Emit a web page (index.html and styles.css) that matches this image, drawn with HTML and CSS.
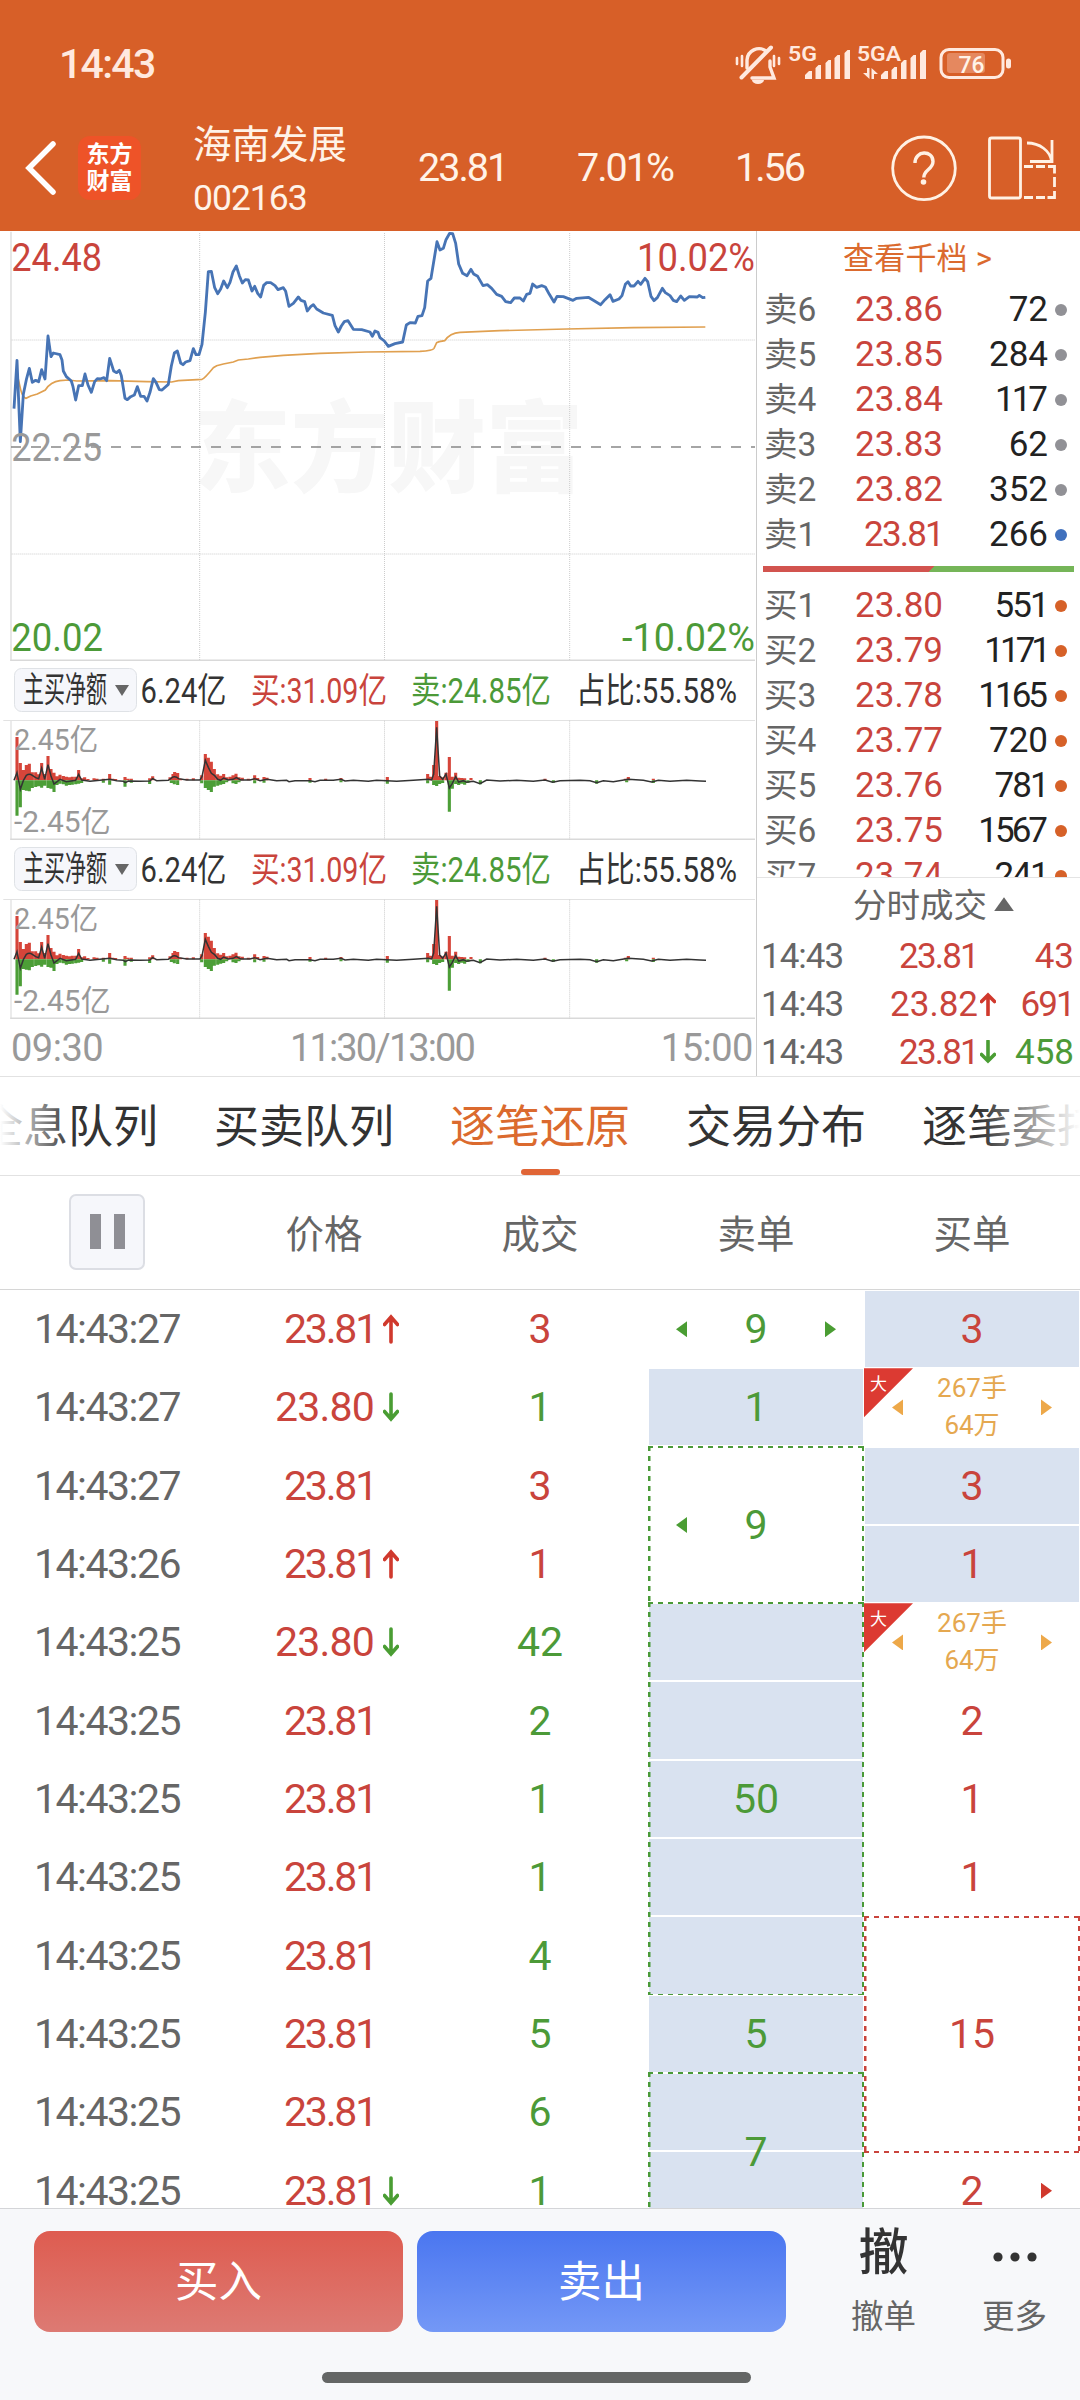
FILE: index.html
```html
<!doctype html>
<html lang="zh-CN">
  <head>
    <meta charset="UTF-8" />
    <meta name="viewport" content="width=device-width, initial-scale=1.0" />
    <title>海南发展 002163</title>
    <link rel="stylesheet" href="styles.css" />
  </head>
  <body>
    <header class="header">
      <div class="status">
        <span class="clock">14:43</span>
        <svg class="status-icons" viewBox="730 40 290 48" width="290" height="48">
          <!-- muted bell -->
          <g fill="none" stroke="#ffe9df" stroke-width="3.4" stroke-linecap="round">
            <path d="M747 68V60a12 12 0 0 1 19-9M770 61v6l4 11H752" />
            <path d="M741.500 77.500 771 47.500" stroke-width="4" />
            <path d="M737 58v6M742 56v10M774 56v10M779 58v6" stroke-width="2.600" />
          </g>
          <path d="M752 80h12a6 4 0 0 1-12 0" fill="#ffe9df" />
          <g fill="#ffe9df">
            <text class="net" x="788" y="61" textLength="29" lengthAdjust="spacingAndGlyphs">5G</text>
            <path d="M805 79v-4l4-4h3v8zM815.500 79V68l3-3h2.500v14zM825.500 79V63l3-3h2.500v19zM834.500 79V58l3-3h2.500v24zM844.500 79V53l3-3h2.500v29z" />
            <text class="net" x="857" y="61" textLength="44" lengthAdjust="spacingAndGlyphs">5GA</text>
            <path d="M881 79v-4l4-4h3v8zM891.500 79V70l3-3h2.500v12zM901 79V63l3-3h2.500v19zM910.500 79V58l3-3h2.500v24zM920 79V53l3-3h3v29z" />
            <path d="M867 68h2.500v11L863 73h4zM871.500 79h2.500v-5h4l-6.500-6z" />
          </g>
          <rect x="947" y="53" width="38" height="20" rx="3" fill="#e5885f" />
          <rect x="941" y="49.500" width="62" height="28" rx="8" fill="none" stroke="#ffe9df" stroke-width="3" />
          <rect x="1006" y="58.500" width="5" height="10" rx="2.500" fill="#ffe9df" />
          <text class="battery" x="958.500" y="73" textLength="26" lengthAdjust="spacingAndGlyphs">76</text>
        </svg>
      </div>
      <div class="titlebar">
        <svg class="back" viewBox="0 0 36 54" width="36" height="54">
          <path d="M31 3 7 27l24 24" fill="none" stroke="#fff" stroke-width="5.500" stroke-linecap="round" />
        </svg>
        <div class="logo"><span>东方</span><span>财富</span></div>
        <div class="stock">
          <div class="stock-name">海南发展</div>
          <div class="stock-code">002163</div>
        </div>
        <span class="quote quote-price">23.81</span>
        <span class="quote quote-pct">7.01%</span>
        <span class="quote quote-diff">1.56</span>
        <svg class="tools" viewBox="885 130 180 74" width="180" height="74">
          <g fill="none" stroke="#fff1e4" stroke-width="2.800">
            <circle cx="924" cy="167.300" r="31.300" />
            <path d="M915 162c0-13 18-13 18-1.500 0 8-9.200 8-9.200 16" stroke-width="3.400" />
            <rect x="989.500" y="137" width="31" height="60" rx="2" />
            <path d="M1027 142c13 0 23 8 24.500 18M1052 139v21.500h-22" />
            <path d="M1024 165.500h9M1036 165.500h9M1048 165.500h6.500v7M1054.500 176v10M1054.500 190v6.500h-7M1045 196.500h-9M1033 196.500h-9" />
          </g>
          <circle cx="923.500" cy="181" r="2.800" fill="#fff1e4" />
        </svg>
      </div>
    </header>

    <!-- shared by both volume charts -->
    <svg class="defs" width="0" height="0">
      <symbol id="flow" viewBox="0 210 2271 360">
        <path d="M10 211h2255M33 210v360" stroke="#e2e2e2" stroke-width="4" />
        <path d="M31 568h2234" stroke="#d9d9d9" stroke-width="5" />
        <path d="M599 212v356M1153.500 212v356M1709 212v356" stroke="#ccc" stroke-width="3" stroke-dasharray="3 3" />
        <path d="M51 391v-130M61 391v-52M70 391v-31M79 391v-46M88 391v-50M97 391v-24M107 391v-24M116 391v-18M125 391v-52M134 391v-19M144 391v-73M153 391v-34M162 391v-23M171 391v-12M180 391v-17M190 391v-13M199 391v-11M208 391v-9M217 391v-11M227 391v-11M236 391v-31M245 391v-6M254 391v-9M264 391v-4M282 391v-6M291 391v-5M310 391v-5M329 391v-19M338 391v-5M347 391v-4M375 391v-10M384 391v-5M394 391v-5M449 391v-6M458 391v-12M510 391v-9M519 391v-19M524 391v-25M533 391v-22M542 391v-5M561 391v-5M580 391v-6M605 391v-15M616 391v-79M625 391v-68M634 391v-56M643 391v-34M653 391v-18M662 391v-14M671 391v-19M680 391v-9M690 391v-11M699 391v-15M708 391v-20M717 391v-9M727 391v-8M745 391v-5M764 391v-15M773 391v-7M792 391v-10M801 391v-8M930 391v-7M977 391v-5M1023 391v-7M1162 391v-10M1283 391v-19M1292 391v-11M1301 391v-46M1310 391v-178M1319 391v-13M1328 391v-9M1338 391v-23M1348 391v-70M1357 391v-11M1367 391v-23M1376 391v-8M1385 391v-7M1394 391v-6M1413 391v-7M1635 391v-5M1876 391v-5M1885 391v-10M1960 391v-5" stroke="#d6453a" stroke-width="9.300" />
        <path d="M51 391v106M61 391v81M70 391v29M79 391v31M88 391v33M97 391v23M107 391v20M116 391v18M125 391v22M134 391v16M144 391v23M153 391v25M162 391v35M171 391v14M180 391v10M190 391v12M199 391v16M208 391v14M217 391v13M227 391v12M236 391v10M245 391v8M310 391v7M329 391v13M375 391v19M394 391v7M449 391v11M514 391v8M523 391v12M533 391v14M605 391v9M616 391v23M625 391v29M634 391v35M643 391v19M653 391v16M662 391v13M671 391v11M680 391v6M699 391v9M708 391v11M717 391v6M764 391v9M792 391v7M930 391v7M1023 391v6M1162 391v10M1283 391v9M1301 391v14M1310 391v17M1319 391v11M1328 391v8M1348 391v94M1357 391v25M1367 391v11M1376 391v14M1385 391v10M1394 391v13M1404 391v7M1441 391v12M1660 391v7M1790 391v10M1880 391v6M1960 391v8" stroke="#4c9e37" stroke-width="9.300" />
        <path d="M42 391 51 368 61 418 70 392 79 376Q88 370 97 376L107 383 116 386 125 354 134 388 144 344 153 378 162 402 180 388 199 395 227 391 236 373 245 390 270 394 300 391 329 388 350 392 370 394 376 398 385 393 420 394 449 393 458 386 470 392 505 391 519 381Q528 378 536 386L560 390 600 390 606 380 616 331 625 352 634 370 644 377 653 388 662 391 671 384 685 390 699 388 709 383 722 390 750 390 764 386 780 392 801 388 830 392 860 391 867 395 885 392 930 392 945 395 960 391 1000 391 1023 388 1035 393 1060 391 1105 394 1130 391 1190 394 1240 391 1285 388 1295 390 1301 372 1310 232 1319 378 1328 388 1338 372 1348 414 1357 400 1367 380 1376 396 1390 392 1400 397 1420 394 1440 401 1460 390 1500 393 1550 391 1600 394 1635 390 1658 397 1680 392 1740 391 1770 392 1790 398 1810 392 1840 395 1885 388 1930 391 1955 396 1975 391 2010 394 2060 391 2100 393 2118 394" fill="none" stroke="#333" stroke-width="4.500" />
      </symbol>
    </svg>

    <main class="market">
      <section class="charts">
        <svg class="price-chart" viewBox="0 18 2271 1290" width="757" height="430">
          <text class="watermark" x="580" y="778" textLength="1170" lengthAdjust="spacingAndGlyphs">东方财富</text>
          <path d="M33 20v1288" stroke="#e2e2e2" stroke-width="5" />
          <path d="M31 1306h2234" stroke="#d9d9d9" stroke-width="5" />
          <path d="M35 345h2230M35 987h2230M599 24v1282M1153.500 24v1282M1709 24v1282" stroke="#ccc" stroke-width="3" stroke-dasharray="3 3" />
          <path d="M33 666h2232" stroke="#888" stroke-width="5" stroke-dasharray="30 30" />
          <path d="M52 450 62 494Q68 518 78 520L92 513 112 507 136 495Q152 470 180 467L205 465 230 468 330 467 440 470 515 471 535 467 606 463Q614 460 640 428L650 422 670 417 700 411 715 405 745 402 780 397 850 391 960 385 1100 381 1260 379Q1298 377 1302 370L1310 353 1318 350 1334 347Q1350 324 1380 322L1500 317 1700 312 1900 308 2116 306" fill="none" stroke="#e0a050" stroke-width="5" />
          <path d="M42 551 51 406 61 650 70 508 79 464 88 430 97 472 107 466 116 470 125 434 135 462 144 333 153 395 160 384 180 389 186 405 190 438 199 455 214 468 219 485 227 525 236 482 247 482 255 447 264 480 274 502 284 470 292 461 300 462 312 458 320 467 329 400 341 438 350 443 358 436 364 452 375 520 382 524 392 515 403 510 412 485 422 514 432 514 441 528 450 502 460 461 468 472 478 494 486 495 505 478 514 423 523 384 532 378 542 414 549 419 557 411 570 407 580 371 588 389 597 389 606 358 616 262 625 140 634 139 644 188 653 206 662 192 671 168 682 188 690 172 699 141 709 123 718 152 727 174 736 164 745 165 756 198 764 184 773 205 782 216 791 181 800 173 812 173 825 182 834 194 850 188 857 199 867 244 880 235 895 216 903 226 914 230 922 258 932 245 940 239 950 252 970 264 997 271 1005 302 1015 321 1024 303 1033 290 1044 287 1060 313 1085 314 1110 321 1117 334 1125 318 1134 322 1140 338 1153 348 1165 364 1185 356 1208 351 1219 300 1230 293 1246 294 1254 274 1266 272 1274 248 1283 168 1293 160 1311 50 1320 75 1330 70 1338 44 1349 25 1358 26 1367 55 1376 117 1388 145 1401 152 1413 133 1421 147 1433 154 1449 182 1462 179 1475 190 1490 208 1505 214 1517 230 1532 233 1543 219 1560 219 1570 228 1580 208 1590 205 1598 177 1610 187 1625 182 1636 186 1648 208 1662 231 1671 214 1690 215 1719 226 1730 220 1765 217 1780 226 1802 239 1815 224 1830 209 1839 229 1857 222 1866 212 1876 178 1884 170 1892 183 1902 183 1914 169 1922 178 1935 160 1943 170 1953 214 1962 227 1972 218 1987 190 1996 203 2010 212 2020 226 2030 230 2042 213 2053 226 2068 215 2092 216 2098 211 2108 218 2116 217" fill="none" stroke="#4774b5" stroke-width="8.500" stroke-linejoin="round" />
          <text class="scale up" x="34" y="138" textLength="272" lengthAdjust="spacingAndGlyphs">24.48</text>
          <text class="scale mid" x="34" y="708" textLength="272" lengthAdjust="spacingAndGlyphs">22.25</text>
          <text class="scale down" x="34" y="1277" textLength="275" lengthAdjust="spacingAndGlyphs">20.02</text>
          <text class="scale up" x="1911" y="138" textLength="354" lengthAdjust="spacingAndGlyphs">10.02%</text>
          <text class="scale down" x="1866" y="1277" textLength="399" lengthAdjust="spacingAndGlyphs">-10.02%</text>
        </svg>

        <svg class="flow-head" viewBox="0 661 757 59" width="757" height="59">
          <rect x="14.500" y="668.500" width="122" height="43" rx="7" fill="#f6f7fb" stroke="#dfe2e6" />
          <text x="23" y="701.500" textLength="84" lengthAdjust="spacingAndGlyphs">主买净额</text>
          <path d="M115 685h14l-7 11z" fill="#666" />
          <text x="140.500" y="703" textLength="86" lengthAdjust="spacingAndGlyphs">6.24亿</text>
          <text class="up" x="251" y="703" textLength="136" lengthAdjust="spacingAndGlyphs">买:31.09亿</text>
          <text class="down" x="411" y="703" textLength="140" lengthAdjust="spacingAndGlyphs">卖:24.85亿</text>
          <text x="576" y="703" textLength="161" lengthAdjust="spacingAndGlyphs">占比:55.58%</text>
        </svg>
        <svg class="flow-chart" viewBox="0 210 2271 360" width="757" height="120">
          <use href="#flow" x="0" y="210" width="2271" height="360" />
          <text class="flow-scale" x="43" y="300" textLength="252" lengthAdjust="spacingAndGlyphs">2.45亿</text>
          <text class="flow-scale" x="42" y="546" textLength="290" lengthAdjust="spacingAndGlyphs">-2.45亿</text>
        </svg>

        <svg class="flow-head" viewBox="0 661 757 59" width="757" height="59">
          <rect x="14.500" y="668.500" width="122" height="43" rx="7" fill="#f6f7fb" stroke="#dfe2e6" />
          <text x="23" y="701.500" textLength="84" lengthAdjust="spacingAndGlyphs">主买净额</text>
          <path d="M115 685h14l-7 11z" fill="#666" />
          <text x="140.500" y="703" textLength="86" lengthAdjust="spacingAndGlyphs">6.24亿</text>
          <text class="up" x="251" y="703" textLength="136" lengthAdjust="spacingAndGlyphs">买:31.09亿</text>
          <text class="down" x="411" y="703" textLength="140" lengthAdjust="spacingAndGlyphs">卖:24.85亿</text>
          <text x="576" y="703" textLength="161" lengthAdjust="spacingAndGlyphs">占比:55.58%</text>
        </svg>
        <svg class="flow-chart" viewBox="0 210 2271 360" width="757" height="120">
          <use href="#flow" x="0" y="210" width="2271" height="360" />
          <text class="flow-scale" x="43" y="300" textLength="252" lengthAdjust="spacingAndGlyphs">2.45亿</text>
          <text class="flow-scale" x="42" y="546" textLength="290" lengthAdjust="spacingAndGlyphs">-2.45亿</text>
        </svg>

        <div class="axis"><span>09:30</span><span class="noon">11:30/13:00</span><span>15:00</span></div>
      </section>

      <aside class="book">
        <div class="book-more">查看千档 &gt;</div>
        <div class="levels">
          <div class="level"><span>卖6</span><b>23.86</b><em>72</em><i></i></div>
          <div class="level"><span>卖5</span><b>23.85</b><em>284</em><i></i></div>
          <div class="level"><span>卖4</span><b>23.84</b><em class="tight">117</em><i></i></div>
          <div class="level"><span>卖3</span><b>23.83</b><em>62</em><i></i></div>
          <div class="level"><span>卖2</span><b>23.82</b><em>352</em><i></i></div>
          <div class="level"><span>卖1</span><b class="end-one">23.81</b><em>266</em><i class="blue"></i></div>
        </div>
        <div class="ratio"></div>
        <div class="levels bids">
          <div class="level"><span>买1</span><b>23.80</b><em class="end-one">551</em><i></i></div>
          <div class="level"><span>买2</span><b>23.79</b><em class="tighter">1171</em><i></i></div>
          <div class="level"><span>买3</span><b>23.78</b><em class="tight">1165</em><i></i></div>
          <div class="level"><span>买4</span><b>23.77</b><em>720</em><i></i></div>
          <div class="level"><span>买5</span><b>23.76</b><em class="end-one">781</em><i></i></div>
          <div class="level"><span>买6</span><b>23.75</b><em class="tight">1567</em><i></i></div>
          <div class="level"><span>买7</span><b>23.74</b><em class="end-one">241</em><i></i></div>
        </div>
        <div class="deals-title">分时成交<i></i></div>
        <div class="deal"><span>14:43</span><b class="end-one">23.81</b><s></s><em class="up">43</em></div>
        <div class="deal"><span>14:43</span><b>23.82</b><s><svg viewBox="0 0 16 24" width="16" height="24"><path class="arrow-up" d="M8 23V3M1.500 9.500 8 3l6.500 6.500" /></svg></s><em class="up end-one">691</em></div>
        <div class="deal"><span>14:43</span><b class="end-one">23.81</b><s><svg viewBox="0 0 16 24" width="16" height="24"><path class="arrow-down" d="M8 1v20M1.500 14.500 8 21l6.500-6.500" /></svg></s><em class="down">458</em></div>
      </aside>
    </main>

    <nav class="tabs">
      <span>全息队列</span>
      <span>买卖队列</span>
      <span class="active">逐笔还原</span>
      <span>交易分布</span>
      <span>逐笔委托</span>
    </nav>

    <div class="cols">
      <div><button class="pause"><i></i><i></i></button></div>
      <div>价格</div>
      <div>成交</div>
      <div>卖单</div>
      <div>买单</div>
    </div>

    <section class="ticks">
      <div class="trades">
        <div class="trade"><span>14:43:27</span><b class="end-one">23.81</b><s><svg viewBox="0 0 16 30" width="16" height="30"><path class="arrow-up" d="M8 28V3M1.500 10.500 8 3l6.500 7.500" /></svg></s><em class="up">3</em></div>
        <div class="trade"><span>14:43:27</span><b>23.80</b><s><svg viewBox="0 0 16 30" width="16" height="30"><path class="arrow-down" d="M8 2v25M1.500 19.500 8 27l6.500-7.500" /></svg></s><em class="down">1</em></div>
        <div class="trade"><span>14:43:27</span><b class="end-one">23.81</b><s></s><em class="up">3</em></div>
        <div class="trade"><span>14:43:26</span><b class="end-one">23.81</b><s><svg viewBox="0 0 16 30" width="16" height="30"><path class="arrow-up" d="M8 28V3M1.500 10.500 8 3l6.500 7.500" /></svg></s><em class="up">1</em></div>
        <div class="trade"><span>14:43:25</span><b>23.80</b><s><svg viewBox="0 0 16 30" width="16" height="30"><path class="arrow-down" d="M8 2v25M1.500 19.500 8 27l6.500-7.500" /></svg></s><em class="down">42</em></div>
        <div class="trade"><span>14:43:25</span><b class="end-one">23.81</b><s></s><em class="down">2</em></div>
        <div class="trade"><span>14:43:25</span><b class="end-one">23.81</b><s></s><em class="down">1</em></div>
        <div class="trade"><span>14:43:25</span><b class="end-one">23.81</b><s></s><em class="down">1</em></div>
        <div class="trade"><span>14:43:25</span><b class="end-one">23.81</b><s></s><em class="down">4</em></div>
        <div class="trade"><span>14:43:25</span><b class="end-one">23.81</b><s></s><em class="down">5</em></div>
        <div class="trade"><span>14:43:25</span><b class="end-one">23.81</b><s></s><em class="down">6</em></div>
        <div class="trade"><span>14:43:25</span><b class="end-one">23.81</b><s><svg viewBox="0 0 16 30" width="16" height="30"><path class="arrow-down" d="M8 2v25M1.500 19.500 8 27l6.500-7.500" /></svg></s><em class="down">1</em></div>
      </div>

      <div class="orders sell">
        <div class="order"><i class="prev"></i>9<i class="next"></i></div>
        <div class="order fill">1</div>
        <div class="order box rows-2"><i class="prev"></i>9</div>
        <div class="order fill box rows-5">50</div>
        <div class="order fill">5</div>
        <div class="order fill box rows-2">7</div>
      </div>

      <div class="orders buy">
        <div class="order fill">3</div>
        <div class="order big"><u>大</u><i class="prev"></i><div>267手<br />64万</div><i class="next"></i></div>
        <div class="order fill">3</div>
        <div class="order fill">1</div>
        <div class="order big"><u>大</u><i class="prev"></i><div>267手<br />64万</div><i class="next"></i></div>
        <div class="order">2</div>
        <div class="order">1</div>
        <div class="order">1</div>
        <div class="order box rows-3">15</div>
        <div class="order">2<i class="next"></i></div>
      </div>
    </section>

    <footer class="footer">
      <div class="actions">
        <button class="btn btn-buy">买入</button>
        <button class="btn btn-sell">卖出</button>
        <div class="action"><strong>撤</strong><span>撤单</span></div>
        <div class="action">
          <strong><svg viewBox="0 0 44 10" width="44" height="10"><g fill="#333"><circle cx="5" cy="5" r="4.600" /><circle cx="22" cy="5" r="4.600" /><circle cx="39" cy="5" r="4.600" /></g></svg></strong>
          <span>更多</span>
        </div>
      </div>
      <div class="home"></div>
    </footer>
  </body>
</html>
```
FILE: styles.css
```css
* {
  box-sizing: border-box;
}
body {
  margin: 0;
  width: 1080px;
  height: 2400px;
  overflow: hidden;
  background: #fff;
  color: #333;
  font-family: Roboto, "Noto Sans CJK SC", sans-serif;
  font-weight: 380;
}
b,
i,
em,
s,
u,
strong {
  font-weight: inherit;
  font-style: normal;
  text-decoration: none;
}
svg {
  display: block;
}
.defs {
  position: absolute;
}
.up {
  color: #c9443c;
  fill: #c9443c;
}
.down {
  color: #4c9a38;
  fill: #4c9a38;
}
.arrow-up,
.arrow-down {
  fill: none;
  stroke: #d0392d;
  stroke-width: 3.600;
  stroke-linecap: round;
}
.arrow-down {
  stroke: #4a9d33;
}

/* header */
.header {
  height: 231px;
  background: #d75f28;
  color: #fff3e8;
}
.status {
  display: flex;
  justify-content: space-between;
  height: 104px;
  padding: 40px 60px 0 59px;
}
.clock {
  font-size: 41px;
  line-height: 48px;
  font-weight: 500;
  letter-spacing: -1.700px;
  color: #ffe9df;
}
.net {
  font-size: 21px;
  font-weight: 600;
}
.battery {
  font-size: 24px;
  font-weight: 500;
  fill: #fff3e8;
}
.titlebar {
  display: flex;
  align-items: center;
  height: 127px;
  padding-left: 22px;
}
.back {
  margin-right: 20px;
}
.logo {
  display: flex;
  flex-direction: column;
  justify-content: center;
  width: 63px;
  height: 64px;
  border-radius: 12px;
  background: #ee5328;
  color: #fff;
  font-size: 23px;
  font-weight: 700;
  line-height: 27px;
  text-align: center;
}
.stock {
  width: 226px;
  padding: 6px 0 0 52px;
}
.stock-name {
  font-size: 38.500px;
  line-height: 54px;
  white-space: nowrap;
}
.stock-code {
  font-size: 35.500px;
  line-height: 52px;
  letter-spacing: -1px;
}
.quote {
  font-size: 39.500px;
  letter-spacing: -2px;
}
.quote-price {
  width: 160px;
  padding-left: 51px;
}
.quote-pct {
  width: 158px;
  padding-left: 50px;
}
.quote-diff {
  width: 200px;
  padding-left: 50px;
}
.tools {
  flex: none;
}

/* charts */
.market {
  display: flex;
  height: 846px;
  border-bottom: 1px solid #e2e2e2;
}
.charts {
  width: 757px;
  border-right: 1px solid #ccc;
}
.watermark {
  font-size: 298px;
  font-weight: 900;
  fill: #f7f7f7;
}
.scale {
  font-size: 114px;
}
.mid {
  fill: #999;
}
.flow-head {
  font-size: 35px;
  fill: #333;
  font-weight: 400;
}
.flow-scale {
  font-size: 89px;
  fill: #999;
}
.axis {
  display: flex;
  justify-content: space-between;
  padding: 0 3px 0 11px;
  font-size: 38px;
  line-height: 58px;
  letter-spacing: -0.500px;
  color: #999;
}
.noon {
  letter-spacing: -1.900px;
}

/* order book */
.book {
  flex: 1;
  display: flex;
  flex-direction: column;
}
.book-more {
  height: 56px;
  padding-left: 86px;
  font-size: 31px;
  line-height: 56px;
  letter-spacing: 0.200px;
  color: #db6a2e;
}
.level {
  display: flex;
  align-items: center;
  height: 45px;
  padding-left: 7px;
  font-size: 35px;
}
.level span {
  width: 60px;
  font-size: 33.500px;
  line-height: 45px;
  color: #666;
}
.level b {
  width: 119px;
  text-align: right;
  color: #c9443c;
}
.level em {
  width: 105px;
  text-align: right;
  color: #222;
}
.level .end-one,
.deal .end-one {
  letter-spacing: -1.800px;
}
.level .tight {
  padding-right: 3px;
  letter-spacing: -3px;
}
.level .tighter {
  letter-spacing: -4px;
  padding-right: 1px;
}
.level i {
  width: 12px;
  height: 12px;
  margin-left: 7px;
  border-radius: 50%;
  background: #919196;
}
.level .blue {
  background: #4070bd;
}
.bids .level i {
  background: #d66128;
}
.ratio {
  flex: none;
  height: 6px;
  margin: 9px 6px 11px;
  background: linear-gradient(135deg, #d2544f 121px, #75b558 121px);
}
.bids {
  height: 296px;
  overflow: hidden;
  border-bottom: 1px solid #e4e4e4;
}
.deals-title {
  display: flex;
  align-items: center;
  justify-content: center;
  height: 54px;
  padding: 0 0 6px 30px;
  font-size: 33.500px;
  color: #666;
}
.deals-title i {
  width: 20px;
  height: 14px;
  margin: 4px 0 0 7px;
  background: #666;
  clip-path: polygon(50% 0, 100% 100%, 0 100%);
}
.deal {
  display: flex;
  align-items: center;
  height: 48px;
  padding-left: 4px;
  font-size: 35px;
  color: #666;
}
.deal span {
  width: 100px;
  letter-spacing: -1px;
}
.deal b {
  width: 117px;
  text-align: right;
  color: #c9443c;
}
.deal s {
  width: 22px;
  padding-left: 2px;
}
.deal em {
  width: 74px;
  text-align: right;
}

/* tabs */
.tabs {
  position: relative;
  display: flex;
  gap: 56px;
  height: 99px;
  padding-left: 214px;
  border-bottom: 1px solid #e2e2e2;
  font-size: 45px;
  line-height: 101px;
  white-space: nowrap;
  overflow: hidden;
}
.tabs span:first-child {
  margin-left: -236px;
}
.tabs::before,
.tabs::after {
  content: "";
  position: absolute;
  top: 0;
  left: 0;
  width: 72px;
  height: 97px;
  background: linear-gradient(to right, #fff, rgba(255, 255, 255, 0));
}
.tabs::after {
  left: auto;
  right: 0;
  width: 100px;
  background: linear-gradient(to left, #fff, rgba(255, 255, 255, 0));
}
.tabs .active {
  position: relative;
  color: #db6a2e;
}
.tabs .active::after {
  content: "";
  position: absolute;
  left: 71px;
  top: 92px;
  width: 39px;
  height: 6px;
  border-radius: 3px;
  background: #e06536;
}

/* tick list */
.cols {
  display: grid;
  grid-template-columns: repeat(5, 216px);
  align-items: center;
  height: 114px;
  padding-bottom: 4px;
  border-bottom: 1px solid #d6d6d6;
  font-size: 38.500px;
  text-align: center;
  color: #666;
}
.pause {
  display: flex;
  justify-content: center;
  align-items: center;
  gap: 13px;
  width: 76px;
  height: 76px;
  margin: 2px 0 0 69px;
  padding: 0;
  border: 2px solid #dcdee4;
  border-radius: 7px;
  background: #f6f7fb;
}
.pause i {
  width: 11px;
  height: 35px;
  background: #8f8f95;
}
.ticks {
  display: grid;
  grid-template-columns: 648px 216px 216px;
  height: 918px;
  overflow: hidden;
  font-size: 41px;
}
.trade {
  display: flex;
  align-items: center;
  height: 78.330px;
  color: #666;
}
.trade span {
  width: 216px;
  padding-right: 2px;
  letter-spacing: -1.500px;
  text-align: center;
}
.trade b {
  width: 160px;
  padding-right: 2px;
  letter-spacing: -0.800px;
  text-align: right;
  color: #c9443c;
}
.trade .end-one {
  padding-right: 0;
  letter-spacing: -2.200px;
}
.trade s {
  width: 56px;
  padding-left: 7px;
}
.trade em {
  width: 216px;
  text-align: center;
}
.order {
  position: relative;
  display: flex;
  align-items: center;
  justify-content: center;
  width: 216px;
  height: 78.330px;
}
.sell {
  --line: #4a9a38;
  color: #4c9a38;
}
.buy {
  --line: #c9443c;
  color: #c9443c;
}
.rows-2 {
  height: 156.660px;
}
.rows-3 {
  height: 235px;
}
.rows-5 {
  height: 391.650px;
}
/* one band per trade row, split by a white line */
.fill {
  background: repeating-linear-gradient(#fff 0 1px, #d9e2f0 1px 77.330px, #fff 77.330px 78.330px);
  box-shadow: inset 1px 0 #fff, inset -1px 0 #fff;
}
/* 5px dashes on all four sides */
.box::after {
  content: "";
  position: absolute;
  inset: -1px 0 -1px 0;
  background:
    repeating-linear-gradient(to right, var(--line) 0 5px, transparent 5px 10px) top / 100% 2px no-repeat,
    repeating-linear-gradient(to right, var(--line) 0 5px, transparent 5px 10px) bottom / 100% 2px no-repeat,
    repeating-linear-gradient(var(--line) 0 5px, transparent 5px 10px) left / 2.500px 100% no-repeat,
    repeating-linear-gradient(var(--line) 0 5px, transparent 5px 10px) right / 2.500px 100% no-repeat;
}
.prev,
.next {
  position: absolute;
  left: 28px;
  top: calc(50% - 8px);
  width: 11px;
  height: 16px;
  background: #4a9d33;
  clip-path: polygon(0 50%, 100% 0, 100% 100%);
}
.next {
  left: auto;
  right: 28px;
  clip-path: polygon(0 0, 100% 50%, 0 100%);
}
.buy .next {
  background: #d0392d;
}
.big {
  font-size: 26px;
  line-height: 37px;
  text-align: center;
  color: #e5a850;
}
.buy .big .prev,
.buy .big .next {
  background: #eda849;
}
.big u {
  position: absolute;
  left: 0;
  top: 0;
  width: 49px;
  height: 49px;
  padding-left: 6px;
  background: #dc3a32;
  clip-path: polygon(0 0, 100% 0, 0 100%);
  color: #fff;
  font-size: 17px;
  line-height: 33px;
  text-align: left;
}

/* footer */
.footer {
  height: 192px;
  border-top: 1px solid #d4d5d8;
  background: #f7f8fa;
}
.actions {
  display: flex;
  padding: 22px 0 0 34px;
}
.btn {
  width: 369px;
  height: 101px;
  margin-right: 14px;
  padding: 0 0 6px;
  border: 0;
  border-radius: 16px;
  color: #fff;
  font: inherit;
  font-size: 43.500px;
  font-weight: 400;
}
.btn-buy {
  background: linear-gradient(#de5c50, #dd7a73);
}
.btn-sell {
  background: linear-gradient(#4a76f0, #7498f6);
}
.action {
  display: flex;
  flex-direction: column;
  align-items: center;
  width: 131px;
  margin-left: 18px;
}
.action + .action {
  margin-left: 0;
}
.action strong {
  display: flex;
  align-items: center;
  height: 52px;
  font-size: 50px;
  font-weight: 500;
  line-height: 44px;
}
.action:first-of-type strong {
  padding-bottom: 8px;
}
.action span {
  margin-top: 10px;
  font-size: 32.500px;
  line-height: 48px;
  color: #666;
}
.home {
  width: 429px;
  height: 11px;
  margin: 31px auto 0 322px;
  border-radius: 6px;
  background: #646665;
}
```
